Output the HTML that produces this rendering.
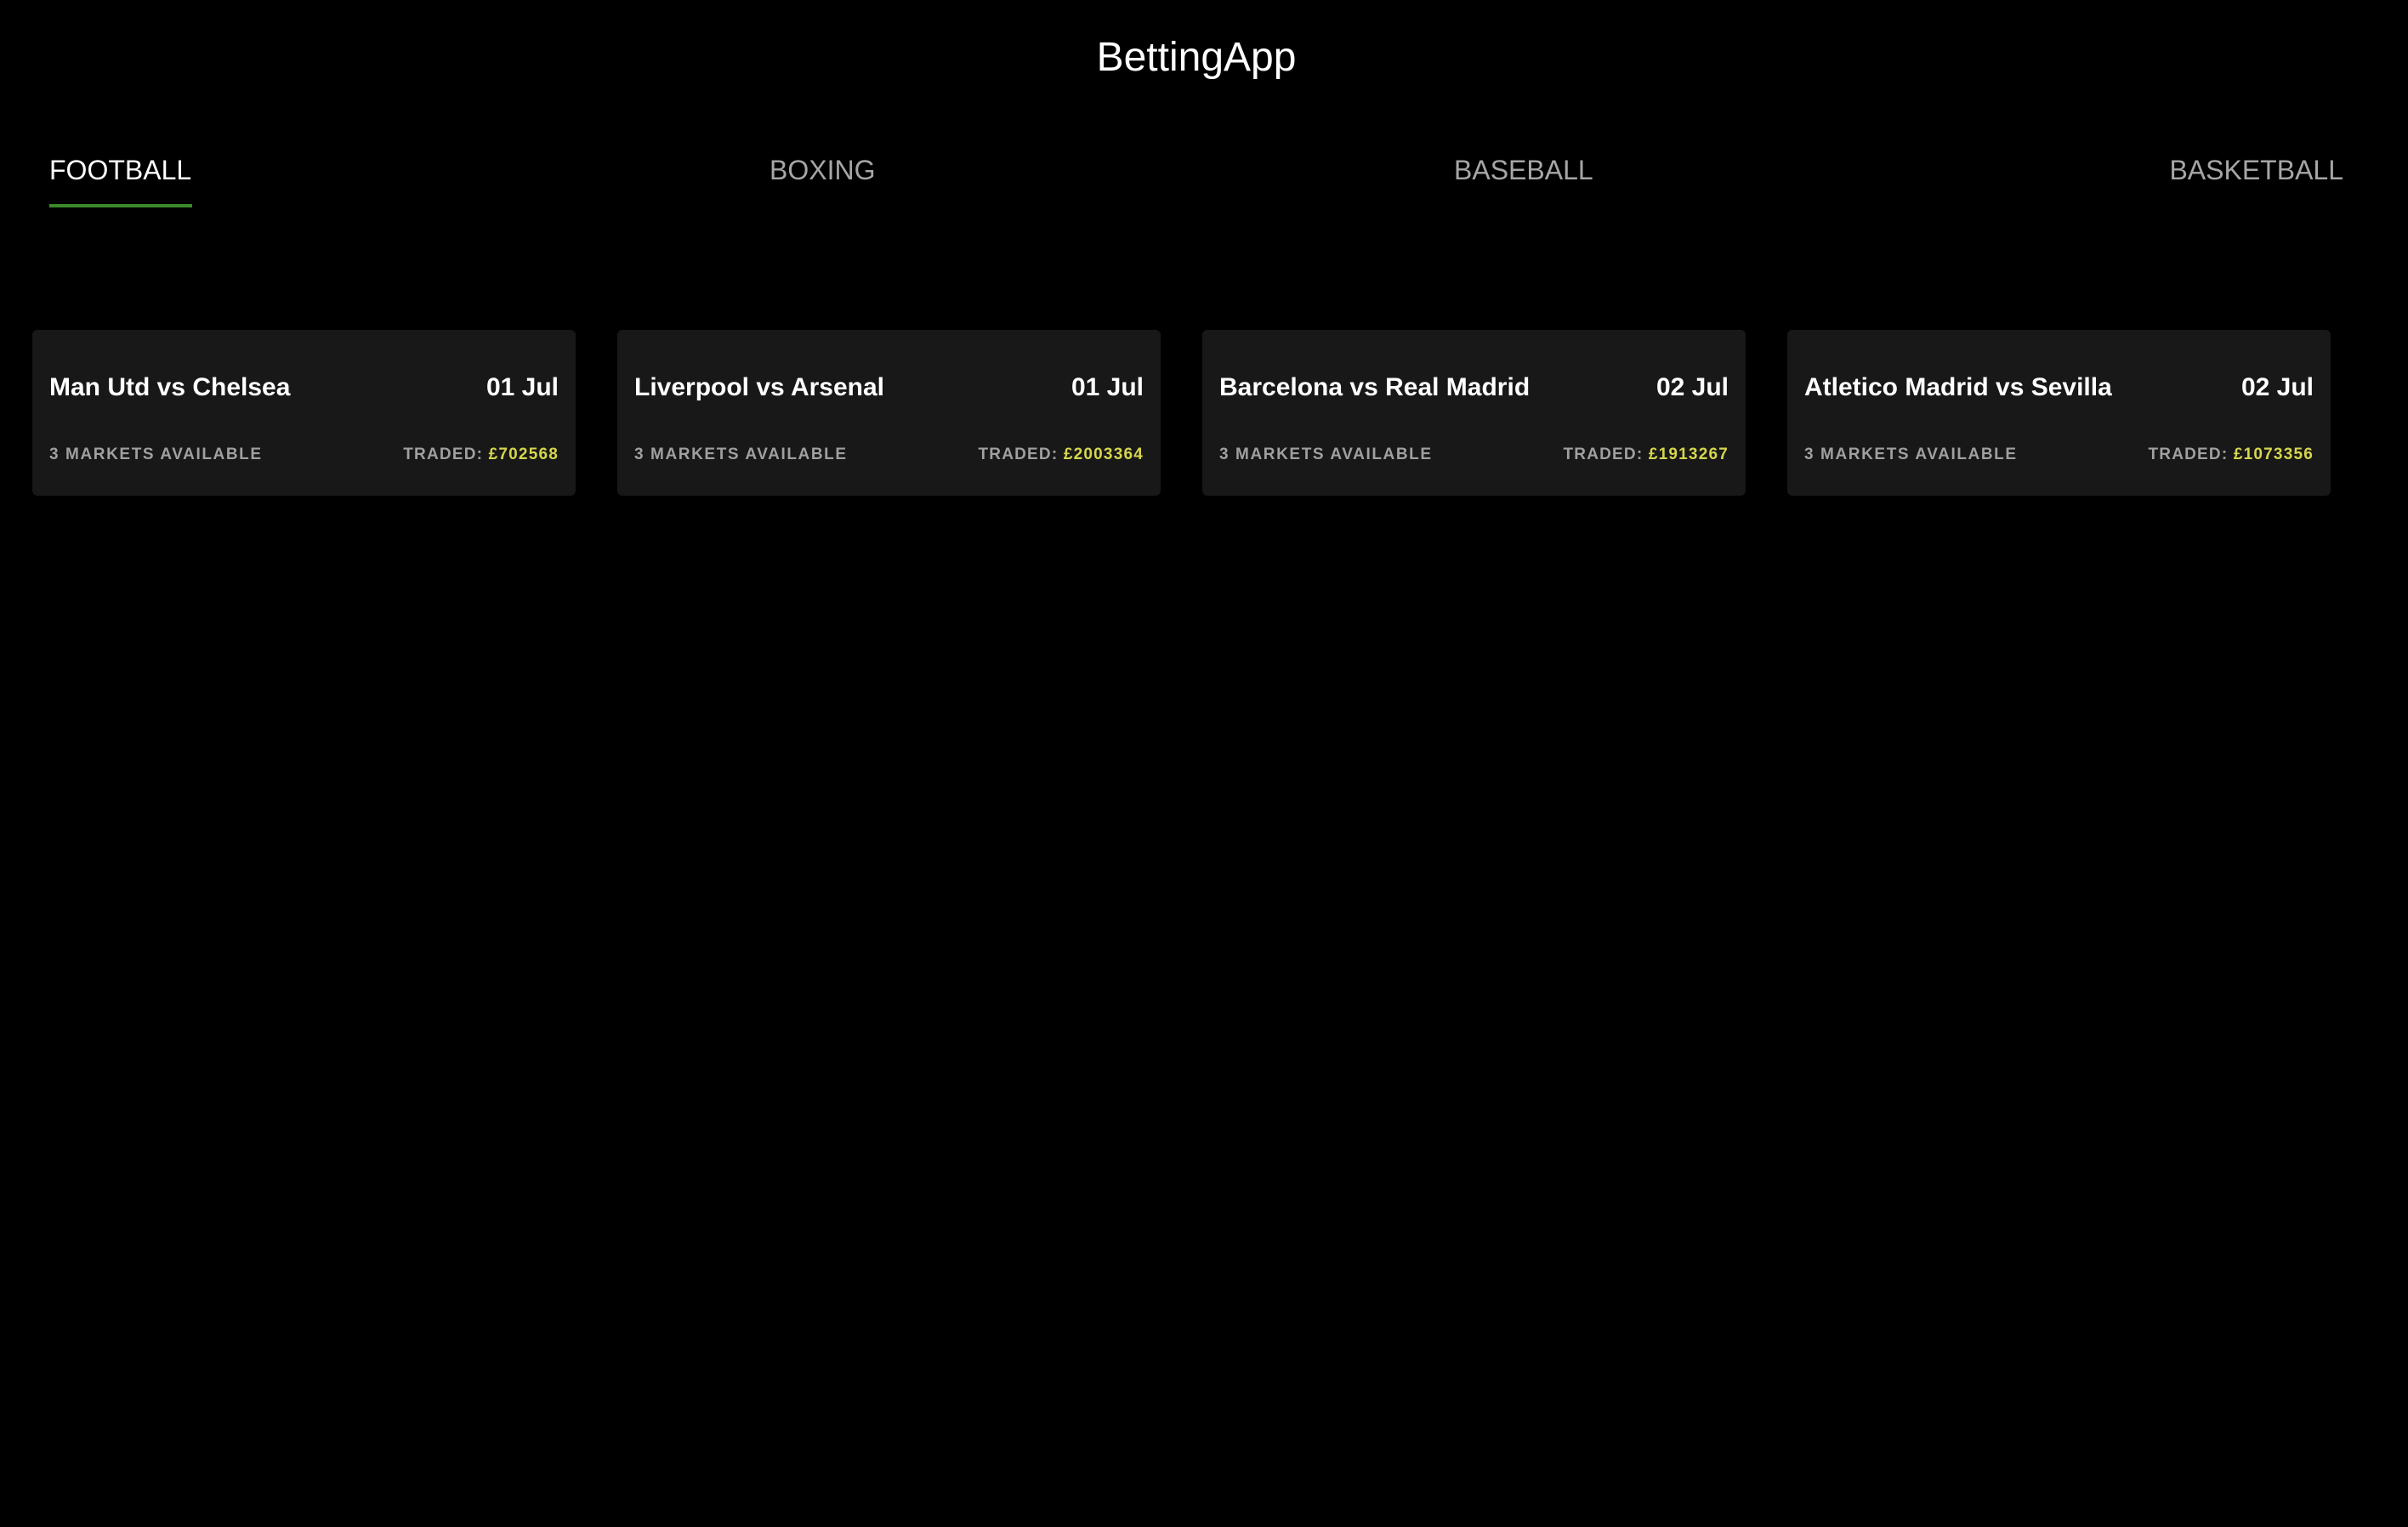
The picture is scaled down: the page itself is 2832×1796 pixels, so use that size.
<!DOCTYPE html>
<html><head><meta charset="utf-8"><style>
html,body{margin:0;padding:0;background:#000;width:2832px;height:1796px;overflow:hidden;font-family:"Liberation Sans",Arial,sans-serif;}
.h{position:absolute;left:-9px;width:2832px;top:39px;text-align:center;color:#fff;font-size:48px;line-height:58px;}
.tab{position:absolute;top:180px;font-size:32px;line-height:40px;color:#a6a6a6;}
.ul{position:absolute;left:58px;top:240px;width:168px;height:4px;background:#3a8a2a;}
.card{position:absolute;top:388px;width:639px;height:195px;background:#181818;border-radius:6px;}
.title{position:absolute;left:20px;top:50px;font-size:30px;font-weight:bold;color:#fff;line-height:36px;}
.date{position:absolute;right:20px;top:50px;font-size:30px;font-weight:bold;color:#fff;line-height:36px;}
.m{position:absolute;left:20px;top:136px;font-size:19px;font-weight:bold;color:#a0a0a0;letter-spacing:1.6px;line-height:22px;}
.tr{position:absolute;right:20px;top:136px;font-size:19px;font-weight:bold;color:#a0a0a0;letter-spacing:1.2px;line-height:22px;}
.tr span{color:#d6d64e;}
</style></head><body>
<div class="h">BettingApp</div>
<div class="tab" style="left:58px;color:#fff">FOOTBALL</div>
<div class="tab" style="left:905px">BOXING</div>
<div class="tab" style="left:1710px">BASEBALL</div>
<div class="tab" style="right:76px">BASKETBALL</div>
<div class="ul"></div>

<div class="card" style="left:38px"><div class="title">Man Utd vs Chelsea</div><div class="date">01 Jul</div><div class="m">3 MARKETS AVAILABLE</div><div class="tr">TRADED: <span>£702568</span></div></div>
<div class="card" style="left:726px"><div class="title">Liverpool vs Arsenal</div><div class="date">01 Jul</div><div class="m">3 MARKETS AVAILABLE</div><div class="tr">TRADED: <span>£2003364</span></div></div>
<div class="card" style="left:1414px"><div class="title">Barcelona vs Real Madrid</div><div class="date">02 Jul</div><div class="m">3 MARKETS AVAILABLE</div><div class="tr">TRADED: <span>£1913267</span></div></div>
<div class="card" style="left:2102px"><div class="title">Atletico Madrid vs Sevilla</div><div class="date">02 Jul</div><div class="m">3 MARKETS AVAILABLE</div><div class="tr">TRADED: <span>£1073356</span></div></div>
</body></html>
